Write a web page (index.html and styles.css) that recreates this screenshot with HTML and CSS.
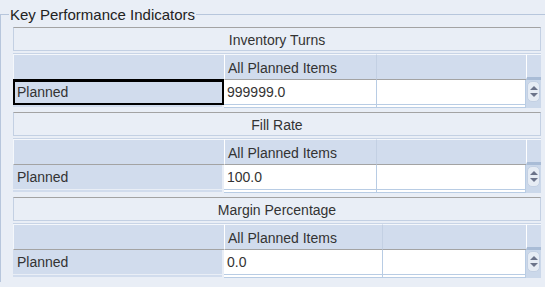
FILE: index.html
```html
<!DOCTYPE html>
<html lang="en">
<head>
    <meta charset="UTF-8">
    <title>Key Performance Indicators</title>
    <link rel="stylesheet" href="styles.css">
</head>
<body>
    <fieldset class="kpi">
        <legend>Key Performance Indicators</legend>

        <div class="measure">
            <div class="measure-title">Inventory Turns</div>
            <div class="grid">
                <div class="head first"></div>
                <div class="head col">All Planned Items</div>
                <div class="head"></div>
                <div class="head corner"></div>
                <div class="rowhead focused">Planned</div>
                <div class="cell value">999999.0</div>
                <div class="cell"></div>
                <div class="track"><span class="spin"><i class="up"></i><i class="down"></i></span></div>
                <div class="rowhead"></div>
                <div class="cell"></div>
                <div class="cell"></div>
                <div class="track"></div>
            </div>
        </div>

        <div class="measure">
            <div class="measure-title">Fill Rate</div>
            <div class="grid">
                <div class="head first"></div>
                <div class="head col">All Planned Items</div>
                <div class="head"></div>
                <div class="head corner"></div>
                <div class="rowhead">Planned</div>
                <div class="cell value">100.0</div>
                <div class="cell"></div>
                <div class="track"><span class="spin"><i class="up"></i><i class="down"></i></span></div>
                <div class="rowhead"></div>
                <div class="cell"></div>
                <div class="cell"></div>
                <div class="track"></div>
            </div>
        </div>

        <div class="measure">
            <div class="measure-title">Margin Percentage</div>
            <div class="grid wide">
                <div class="head first"></div>
                <div class="head col">All Planned Items</div>
                <div class="head"></div>
                <div class="head corner"></div>
                <div class="rowhead">Planned</div>
                <div class="cell value">0.0</div>
                <div class="cell"></div>
                <div class="track"><span class="spin"><i class="up"></i><i class="down"></i></span></div>
                <div class="rowhead"></div>
                <div class="cell"></div>
                <div class="cell"></div>
                <div class="track"></div>
            </div>
        </div>
    </fieldset>
</body>
</html>
```

FILE: styles.css
```css
body {
    margin: 0;
    background: #e9eef6;
    font-family: 'Liberation Sans', Arial, sans-serif;
    color: #333;
    overflow: hidden;
}

.kpi {
    margin: 6px 0 0;
    padding: 5px 0 0 12px;
    border: none;
    border-top: 1px solid #b7c6dc;
    border-left: 1px solid #b7c6dc;
    min-height: 270px;
}

.kpi legend {
    font-size: 15px;
    line-height: 14px;
    padding: 2px 1px 0;
    margin-left: -4px;
    color: #222;
}

.measure {
    width: 528px;
    margin-bottom: 4px;
}

.measure-title {
    height: 24px;
    box-sizing: border-box;
    border: 1px solid #c3d0e3;
    border-top-color: #a3a3a3;
    text-align: center;
    font-size: 14px;
    line-height: 22px;
    padding-top: 1px;
}

.grid {
    margin-top: 2px;
    display: grid;
    grid-template-columns: 211px 153px 149px 15px;
    grid-template-rows: 26px 25px 3px;
    border-top: 1px solid #c8d4e6;
    overflow: hidden;
    font-size: 14px;
}

.grid.wide {
    grid-template-columns: 211px 159px 143px 15px;
}

.head {
    background: #d1dced;
    border-bottom: 1px solid #a3a3a3;
    border-top: 1px solid #f4f7fb;
    box-sizing: border-box;
}

.head.first {
    border-left: 1px solid #f4f7fb;
}

.head.col {
    border-left: 1px solid #ffffff;
    border-right: 1px solid #c3d0e3;
    padding: 3px 0 0 3px;
    line-height: 20px;
}

.head.corner {
    border-left: 1px solid #ffffff;
    border-bottom: 3px solid #a9bcd6;
}

.rowhead {
    background: #d1dced;
    border-bottom: 1px solid #e9eef6;
    border-right: 2px solid #e9eef6;
    padding: 2px 0 0 4px;
    line-height: 20px;
    box-sizing: border-box;
}

.rowhead.focused {
    border: 2px solid #000;
    border-top-width: 3px;
    margin-top: -1px;
    padding: 0 0 0 2px;
    line-height: 21px;
}

.cell {
    background: #fff;
    border-right: 1px solid #b8cce4;
    border-bottom: 1px solid #b8cce4;
    box-sizing: border-box;
}

.cell.value {
    padding: 2px 0 0 3px;
    line-height: 20px;
}

.track {
    background: #cbd8ea;
    padding: 1px 0 0 1px;
}

.spin {
    display: block;
    width: 13px;
    height: 21px;
    box-sizing: border-box;
    border: 1px solid #c3d0e3;
    border-radius: 5px;
    background: #e6ecf4;
    position: relative;
}

.spin i {
    position: absolute;
    left: 2px;
    width: 0;
    height: 0;
    border-left: 4px solid transparent;
    border-right: 4px solid transparent;
}

.spin .up {
    top: 4px;
    border-bottom: 4px solid #6b7389;
}

.spin .down {
    top: 11px;
    border-top: 4px solid #6b7389;
}
```
